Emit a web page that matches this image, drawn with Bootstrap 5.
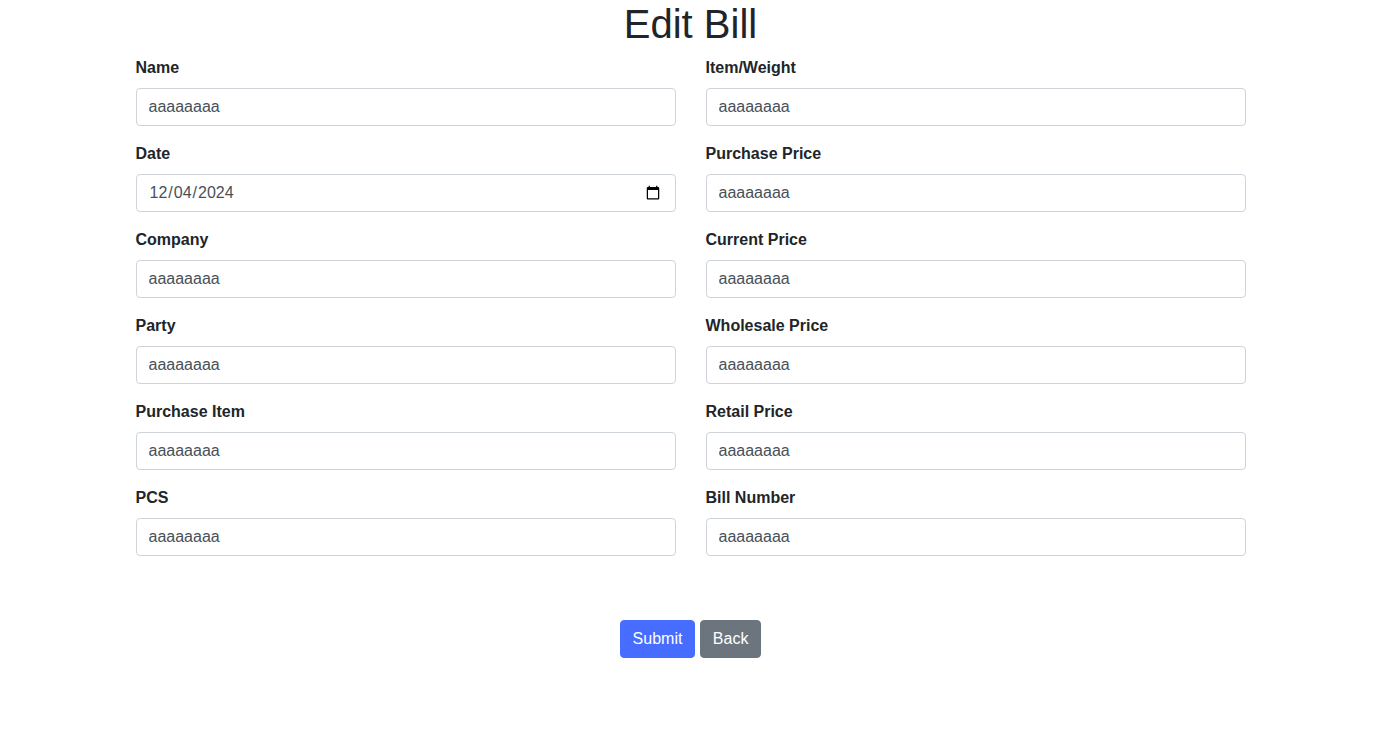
<!DOCTYPE html>
<html lang="en">
<head>
    <meta charset="UTF-8">
    <meta name="viewport" content="width=device-width, initial-scale=1.0">
    <title>Edit Bill</title>
    <link href="https://cdn.jsdelivr.net/npm/bootstrap@5.3.0/dist/css/bootstrap.min.css" rel="stylesheet">
    <style>
        body { font-family: "Liberation Sans", Arial, sans-serif; color: #212529; padding-right: 1px; }
        .bill-wrap { max-width: 1140px; margin: 0 auto; padding: 0 15px; }
        .bill-row { --bs-gutter-x: 30px; }
        h1 { font-size: 40px; line-height: 48px; margin: 0 0 8px; }
        .form-label { font-weight: 700; margin-bottom: 8px; line-height: 24px; display: block; }
        .form-control { border-color: #ced4da; border-radius: 4px; color: #495057; }
        .form-control::-webkit-datetime-edit-month-field,
        .form-control::-webkit-datetime-edit-day-field,
        .form-control::-webkit-datetime-edit-year-field { padding: 1px; }
        .field-box { margin-bottom: 16px; height: 70px; }
        .btn { border-radius: 4px; }
        .btn-submit { background: #466dff; border-color: #466dff; color: #fff; }
        .actions { margin-top: 48px; }
    </style>
</head>
<body>
    <div class="bill-wrap">
        <h1 class="text-center">Edit Bill</h1>
        <form>
            <div class="row bill-row">
                <div class="col-6">
                    <div class="field-box"><label class="form-label">Name</label><input class="form-control" value="aaaaaaaa"></div>
                    <div class="field-box"><label class="form-label">Date</label><input type="date" class="form-control" value="2024-12-04"></div>
                    <div class="field-box"><label class="form-label">Company</label><input class="form-control" value="aaaaaaaa"></div>
                    <div class="field-box"><label class="form-label">Party</label><input class="form-control" value="aaaaaaaa"></div>
                    <div class="field-box"><label class="form-label">Purchase Item</label><input class="form-control" value="aaaaaaaa"></div>
                    <div class="field-box"><label class="form-label">PCS</label><input class="form-control" value="aaaaaaaa"></div>
                </div>
                <div class="col-6">
                    <div class="field-box"><label class="form-label">Item/Weight</label><input class="form-control" value="aaaaaaaa"></div>
                    <div class="field-box"><label class="form-label">Purchase Price</label><input class="form-control" value="aaaaaaaa"></div>
                    <div class="field-box"><label class="form-label">Current Price</label><input class="form-control" value="aaaaaaaa"></div>
                    <div class="field-box"><label class="form-label">Wholesale Price</label><input class="form-control" value="aaaaaaaa"></div>
                    <div class="field-box"><label class="form-label">Retail Price</label><input class="form-control" value="aaaaaaaa"></div>
                    <div class="field-box"><label class="form-label">Bill Number</label><input class="form-control" value="aaaaaaaa"></div>
                </div>
            </div>
            <div class="actions text-center">
                <button type="submit" class="btn btn-submit">Submit</button>
                <a href="#" class="btn btn-secondary">Back</a>
            </div>
        </form>
    </div>
</body>
</html>
